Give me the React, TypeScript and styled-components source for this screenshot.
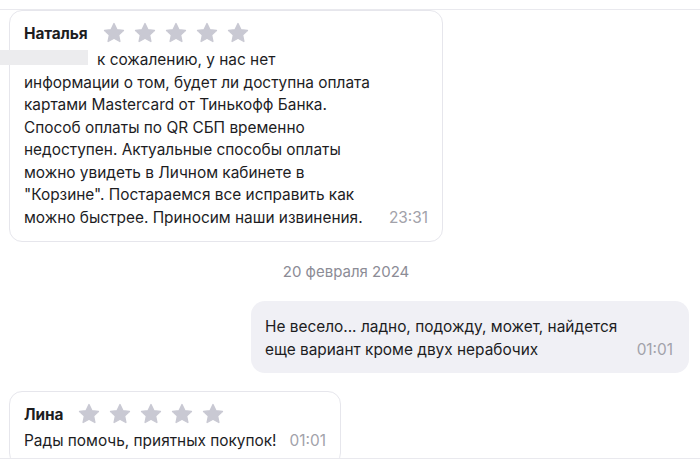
import React from 'react';
import styled, { createGlobalStyle } from 'styled-components';

const GlobalStyle = createGlobalStyle`
  html, body {
    margin: 0;
    padding: 0;
    background: #ffffff;
  }
  body {
    font-family: Inter, "Noto Sans", "Liberation Sans", sans-serif;
    color: #1d1d1f;
    -webkit-font-smoothing: antialiased;
  }
`;

const Page = styled.div`
  width: 700px;
  height: 476px;
  padding-top: 10px;
  box-sizing: border-box;
`;

const Feed = styled.div`
  height: 450px;
  box-sizing: border-box;
  border-top: 1px solid #e9e9ee;
  border-bottom: 1px solid #e9e9ee;
  overflow: hidden;
  display: flex;
  flex-direction: column;
  margin-top: -1px;
`;

const Card = styled.div<{ $top?: number }>`
  position: relative;
  align-self: flex-start;
  margin: ${p => p.$top ?? 0}px 0 0 9px;
  padding: 10px 14px 12px 14px;
  background: #fff;
  border: 1px solid #e6e6ec;
  border-radius: 13px;
  flex-shrink: 0;
`;

const Header = styled.div`
  display: flex;
  align-items: center;
  height: 24px;
  margin-bottom: 4px;
`;

const Name = styled.span`
  font-size: 15.4px;
  font-weight: 700;
  letter-spacing: -0.1px;
`;

const Stars = styled.div`
  display: flex;
  gap: 7px;
  margin-left: 14px;
`;

const Body = styled.div<{ $gap?: number }>`
  display: flex;
  align-items: flex-end;
  gap: ${p => p.$gap ?? 15}px;
`;

const Text = styled.div<{ $indent?: number }>`
  font-size: 15.4px;
  line-height: 22.5px;
  white-space: pre-line;
  text-indent: ${p => p.$indent ?? 0}px;
`;

const Time = styled.span`
  font-size: 15.4px;
  line-height: 22.5px;
  color: #a2a2aa;
  flex-shrink: 0;
`;

const Redacted = styled.div`
  position: absolute;
  left: -10px;
  top: 39px;
  width: 88px;
  height: 15px;
  background: #ececee;
`;

const DateLabel = styled.div`
  align-self: center;
  margin: 19px 0 0 -8px;
  font-size: 15px;
  line-height: 22px;
  color: #8c8c96;
`;

const Bubble = styled.div`
  align-self: flex-end;
  margin: 18px 11px 0 0;
  width: 438px;
  box-sizing: border-box;
  padding: 15px 16px 12px 14px;
  background: #f0f0f5;
  border-radius: 14px;
  flex-shrink: 0;
`;

const PushedTime = styled(Time)`
  margin-left: auto;
`;

const Star = () => (
  <svg width="24" height="24" viewBox="0 0 24 24">
    <path
      d="M12 2.6l2.85 6.05 6.6.78-4.88 4.52 1.3 6.55L12 17.25 6.13 20.5l1.3-6.55L2.55 9.43l6.6-.78z"
      fill="#c9c9d3"
      stroke="#c9c9d3"
      strokeWidth="1.4"
      strokeLinejoin="round"
    />
  </svg>
);

const Rating = () => (
  <Stars>
    {[0, 1, 2, 3, 4].map(i => (
      <Star key={i} />
    ))}
  </Stars>
);

export default function App() {
  return (
    <>
      <GlobalStyle />
      <Page>
        <Feed>
          <Card>
            <Header>
              <Name>Наталья</Name>
              <Rating />
            </Header>
            <Redacted />
            <Body $gap={19}>
              <Text $indent={73}>
                {'к сожалению, у нас нет\nинформации о том, будет ли доступна оплата\nкартами Mastercard от Тинькофф Банка.\nСпособ оплаты по QR СБП временно\nнедоступен. Актуальные способы оплаты\nможно увидеть в Личном кабинете в\n"Корзине". Постараемся все исправить как\nможно быстрее. Приносим наши извинения.'}
              </Text>
              <Time>23:31</Time>
            </Body>
          </Card>

          <DateLabel>20 февраля 2024</DateLabel>

          <Bubble>
            <Body>
              <Text>{'Не весело... ладно, подожду, может, найдется\nеще вариант кроме двух нерабочих'}</Text>
              <PushedTime>01:01</PushedTime>
            </Body>
          </Bubble>

          <Card $top={18}>
            <Header>
              <Name>Лина</Name>
              <Rating />
            </Header>
            <Body $gap={13}>
              <Text>Рады помочь, приятных покупок!</Text>
              <Time>01:01</Time>
            </Body>
          </Card>
        </Feed>
      </Page>
    </>
  );
}
